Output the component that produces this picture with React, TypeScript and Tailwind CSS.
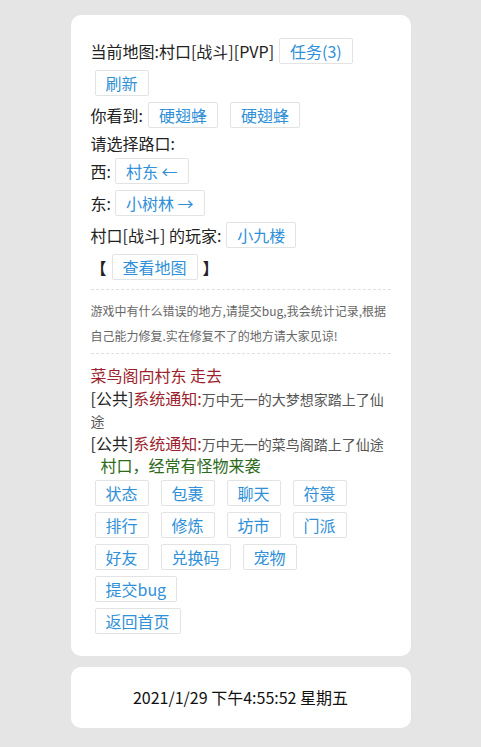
import type { ReactNode } from 'react';

function Btn({ children, className = '' }: { children: ReactNode; className?: string }) {
  return (
    <span
      className={
        'inline-flex h-[26px] items-center rounded-[2px] border border-[#e3e3e3] bg-white px-[10px] text-[16px] text-[#3090d8] ' +
        className
      }
    >
      {children}
    </span>
  );
}

const menuRows = [
  ['状态', '包裹', '聊天', '符箓'],
  ['排行', '修炼', '坊市', '门派'],
  ['好友', '兑换码', '宠物'],
  ['提交bug'],
  ['返回首页'],
];

export default function App() {
  return (
    <div className="min-h-screen bg-[#e5e5e5] pt-[15px] pb-5 font-['Noto_Sans_CJK_SC',sans-serif] text-[16px] text-[#222]">
      <div className="mx-auto w-[340px] rounded-[10px] bg-white px-5 pt-5 pb-[19px]">
        <div className="flex h-8 items-center">
          <span>当前地图:村口[战斗][PVP]</span>
          <Btn className="ml-[5px]">任务(3)</Btn>
        </div>
        <div className="flex h-8 items-center">
          <Btn className="ml-1">刷新</Btn>
        </div>
        <div className="flex h-8 items-center">
          <span>你看到:</span>
          <Btn className="ml-[5px]">硬翅蜂</Btn>
          <Btn className="ml-3">硬翅蜂</Btn>
        </div>
        <div className="flex h-6 items-center">请选择路口:</div>
        <div className="flex h-8 items-center">
          <span>西:</span>
          <Btn className="ml-1">村东 ←</Btn>
        </div>
        <div className="flex h-8 items-center">
          <span>东:</span>
          <Btn className="ml-1">小树林 →</Btn>
        </div>
        <div className="flex h-8 items-center">
          <span>村口[战斗] 的玩家:</span>
          <Btn className="ml-[5px]">小九楼</Btn>
        </div>
        <div className="flex h-8 items-center">
          <span className="font-bold">【</span>
          <Btn className="ml-[5px]">查看地图</Btn>
          <span className="ml-[5px] font-bold">】</span>
        </div>

        <div className="mt-[6px] border-t border-dashed border-[#e0e0e0] pt-[8px] pb-[5px] text-[12px] leading-[25px] text-[#666]">
          游戏中有什么错误的地方,请提交bug,我会统计记录,根据自己能力修复.实在修复不了的地方请大家见谅!
        </div>

        <div className="border-t border-dashed border-[#e0e0e0] pt-[10px] leading-[22.5px]">
          <div className="text-[#9c1f2e]">菜鸟阁向村东 走去</div>
          <div>
            [公共]<span className="text-[#9c1f2e]">系统通知:</span>
            <span className="text-[14px] leading-none text-[#555]">万中无一的大梦想家踏上了仙途</span>
          </div>
          <div>
            [公共]<span className="text-[#9c1f2e]">系统通知:</span>
            <span className="text-[14px] leading-none text-[#555]">万中无一的菜鸟阁踏上了仙途</span>
          </div>
          <div className="pl-[10px] text-[#2d6a1a]">村口，经常有怪物来袭</div>
        </div>

        <div>
          {menuRows.map((row, i) => (
            <div key={i} className="flex h-8 items-center gap-3 pl-1">
              {row.map((label) => (
                <Btn key={label}>{label}</Btn>
              ))}
            </div>
          ))}
        </div>
      </div>

      <div className="mx-auto mt-[11px] flex h-[61px] w-[340px] items-center justify-center rounded-[10px] bg-white text-[#111]">
        2021/1/29 下午4:55:52 星期五
      </div>
    </div>
  );
}
